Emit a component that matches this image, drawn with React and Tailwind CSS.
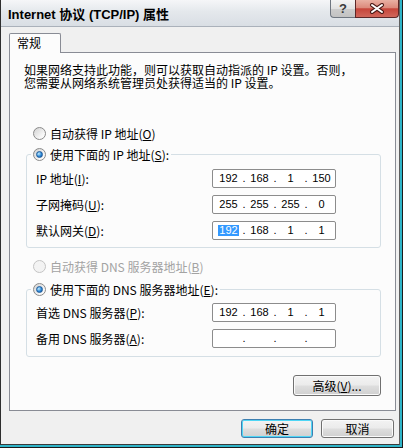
import React from 'react';

const CJK = "[font-family:'Noto_Sans_CJK_SC',sans-serif]";
const NUM = "[font-family:'Liberation_Sans',Arial,sans-serif]";

function Radio({ checked, disabled }) {
  return (
    <span
      className={`flex h-[13px] w-[13px] shrink-0 items-center justify-center rounded-full border ${
        disabled
          ? 'border-[#c4c4c4] bg-[#f3f3f3]'
          : 'border-[#8a8a8a] bg-[linear-gradient(135deg,#d2d2d2,#f7f7f7_70%,#ffffff)]'
      }`}
    >
      {checked && (
        <span className="h-[7px] w-[7px] rounded-full border border-[#1d5a9a] bg-[radial-gradient(circle_at_35%_35%,#c4ecff,#2e8ad8_55%,#0f4f96)]" />
      )}
    </span>
  );
}

function IpBox({ parts, selectFirst }) {
  return (
    <div className={`flex h-[19px] w-[124px] items-center rounded-[2px] border border-[#8c8c8c] bg-white pl-[2px] text-[11px] text-black ${NUM}`}>
      {parts.map((p, i) => (
        <React.Fragment key={i}>
          <span className="flex w-[27px] justify-center">
            <span className={i === 0 && selectFirst ? 'bg-[#3399ff] px-[1px] leading-[11px] text-white' : 'leading-[11px]'}>{p}</span>
          </span>
          {i < 3 && <span className="w-[4px] text-center leading-[11px]">.</span>}
        </React.Fragment>
      ))}
    </div>
  );
}

function Row({ label, parts, selectFirst }) {
  return (
    <div className="flex h-[19px] items-center justify-between">
      <span className="leading-[13px]">{label}</span>
      <IpBox parts={parts} selectFirst={selectFirst} />
    </div>
  );
}

function Btn({ children, def, className }) {
  return (
    <button
      className={`flex items-center justify-center rounded-[3px] border bg-[linear-gradient(#f3f3f3_0%,#ebebeb_48%,#dedede_52%,#d0d0d0_100%)] text-[12px] leading-[13px] text-black ${
        def ? 'border-[#3c7fb1] shadow-[inset_0_0_0_1px_#4fd6f5]' : 'border-[#707070] shadow-[inset_0_0_0_1px_#fafafa]'
      } ${className}`}
    >
      {children}
    </button>
  );
}

export default function App() {
  return (
    <div className={`h-[448px] w-[404px] bg-white text-[12px] text-black ${CJK}`}>
      <div className="h-full w-[403px] border-r border-b border-[#1b1b1b]">
        <div className="h-full w-full border-r-2 border-b-2 border-[#2fb4c8]">
          <div className="flex h-full flex-col border-l border-r border-b border-l-[#2e2e2e] border-r-[#5f5f5f] border-b-[#3a3a3a]">
            {/* title bar */}
            <div className="flex h-[27px] items-start border-b border-[#aab1ba] bg-[linear-gradient(180deg,#f5f6f8_0%,#e4e8ec_45%,#d9dee4_100%)]">
              <span className="pl-[7px] pt-[7px] text-[13px] font-bold leading-[16px] text-black [font-family:'Liberation_Sans','Noto_Sans_CJK_SC',sans-serif]">
                Internet 协议 (TCP/IP) 属性
              </span>
              <div className="ml-auto flex">
                <div className="flex h-[18px] w-[25px] items-center justify-center rounded-bl-[4px] border border-r-0 border-t-0 border-[#6f7680] bg-[linear-gradient(#f4f4f4_0%,#e2e2e2_50%,#cdcdcd_51%,#c2c2c2_100%)] text-[13px] font-bold leading-none text-[#3b3b3b] [font-family:'Liberation_Sans',sans-serif]">
                  ?
                </div>
                <div className="flex h-[18px] w-[44px] items-center justify-center rounded-br-[4px] border border-t-0 border-[#5c2727] bg-[linear-gradient(#e9b0a3_0%,#dc8a7c_45%,#c6453a_52%,#d0665a_100%)]">
                  <svg width="16" height="11" viewBox="0 0 16 11">
                    <path d="M3 2 L13 9 M13 2 L3 9" stroke="#4a1a16" strokeWidth="4" strokeLinecap="round" />
                    <path d="M3 2 L13 9 M13 2 L3 9" stroke="#ffffff" strokeWidth="2" strokeLinecap="round" />
                  </svg>
                </div>
              </div>
            </div>

            {/* client area */}
            <div className="flex flex-1 flex-col bg-[#f0f0f0] pl-[8px] pt-[6px]">
              <div className="relative z-10 -mb-px flex h-[20px] w-[52px] rounded-t-[2px] border border-b-0 border-[#898c95] bg-[#fcfcfc] pl-[7px] pt-[2px] leading-[13px]">
                常规
              </div>
              <div className="flex h-[359px] w-[387px] flex-col border border-[#898c95] bg-[#fcfcfc] pl-[14px] pt-[10px]">
                <p className="whitespace-nowrap leading-[13px]">
                  如果网络支持此功能，则可以获取自动指派的 IP 设置。否则，
                  <br />
                  您需要从网络系统管理员处获得适当的 IP 设置。
                </p>

                <div className="ml-[9px] mt-[38px] flex h-[13px] items-center gap-[4px] leading-[13px]">
                  <Radio />
                  <span>自动获得 IP 地址(<u>O</u>)</span>
                </div>

                <fieldset className="ml-[2px] mt-[8px] w-[355px] rounded-[3px] border border-[#d5dfe5] pb-[7px] pl-[9px] pr-[44px]">
                  <legend className="-ml-[5px] flex h-[13px] items-center gap-[4px] px-[2px] leading-[13px]">
                    <Radio checked />
                    <span>使用下面的 IP 地址(<u>S</u>):</span>
                  </legend>
                  <div className="mt-[8px] flex flex-col gap-[7px]">
                    <Row label={<>IP 地址(<u>I</u>):</>} parts={['192', '168', '1', '150']} />
                    <Row label={<>子网掩码(<u>U</u>):</>} parts={['255', '255', '255', '0']} />
                    <Row label={<>默认网关(<u>D</u>):</>} parts={['192', '168', '1', '1']} selectFirst />
                  </div>
                </fieldset>

                <div className="ml-[9px] mt-[12px] flex h-[13px] items-center gap-[4px] leading-[13px] text-[#a3a3a3]">
                  <Radio disabled />
                  <span>自动获得 DNS 服务器地址(<u>B</u>)</span>
                </div>

                <fieldset className="ml-[2px] mt-[10px] w-[355px] rounded-[3px] border border-[#d5dfe5] pb-[8px] pl-[9px] pr-[44px]">
                  <legend className="-ml-[5px] flex h-[13px] items-center gap-[4px] px-[2px] leading-[13px]">
                    <Radio checked />
                    <span>使用下面的 DNS 服务器地址(<u>E</u>):</span>
                  </legend>
                  <div className="mt-[7px] flex flex-col gap-[7px]">
                    <Row label={<>首选 DNS 服务器(<u>P</u>):</>} parts={['192', '168', '1', '1']} />
                    <Row label={<>备用 DNS 服务器(<u>A</u>):</>} parts={['', '', '', '']} />
                  </div>
                </fieldset>

                <div className="ml-[2px] mt-[18px] flex w-[355px] justify-end">
                  <Btn className="h-[21px] w-[88px]">
                    高级(<u>V</u>)...
                  </Btn>
                </div>
              </div>

              <div className="mt-[8px] flex justify-end gap-[8px] pr-[5px]">
                <Btn def className="h-[19px] w-[72px]">确定</Btn>
                <Btn className="h-[19px] w-[73px]">取消</Btn>
              </div>
            </div>
          </div>
        </div>
      </div>
    </div>
  );
}
